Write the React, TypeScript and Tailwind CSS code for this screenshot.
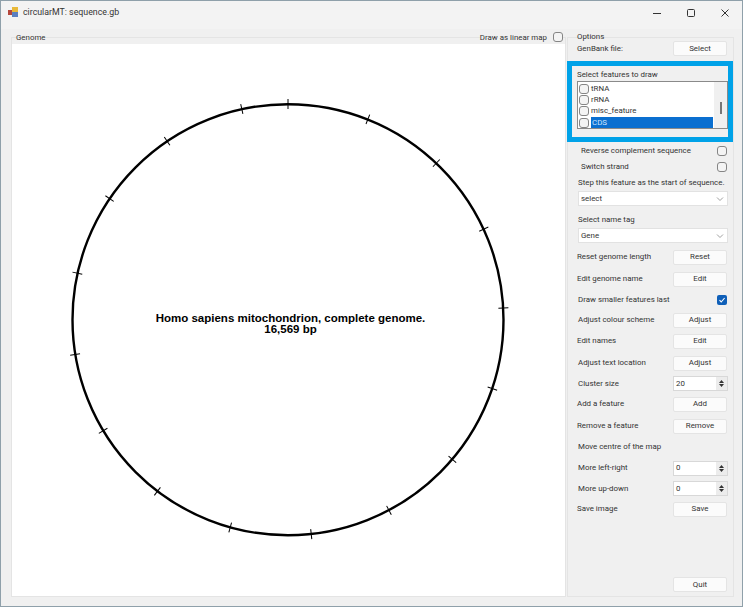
const ticks = Array.from({ length: 17 }, (_, i) => i * 21.727);

function Btn({ label }: { label: string }) {
  return (
    <div className="flex h-[15px] w-[54px] items-center justify-center rounded-[2px] border border-[#e4e4e4] bg-[#fbfbfb] text-[7.9px] text-[#333]">
      {label}
    </div>
  );
}

function Check({ on }: { on?: boolean }) {
  return on ? (
    <div className="flex h-[10px] w-[10px] shrink-0 items-center justify-center rounded-[2px] bg-[#0f5fb8]">
      <svg width="8" height="8" viewBox="0 0 8 8"><path d="M1.5 4.2 3.2 6 6.6 2" fill="none" stroke="#fff" strokeWidth="1.1" /></svg>
    </div>
  ) : (
    <div className="h-[10px] w-[10px] shrink-0 rounded-[3px] border border-[#858585] bg-[#f4f4f4]" />
  );
}

function Row({ label, children, h = 22, pl = 9 }: { label: string; children?: React.ReactNode; h?: number; pl?: number }) {
  return (
    <div className="flex items-center justify-between pr-[6px]" style={{ height: h, paddingLeft: pl }}>
      <span className="text-[7.9px] text-[#333]">{label}</span>
      {children}
    </div>
  );
}

function Combo({ label }: { label: string }) {
  return (
    <div className="ml-[10px] mr-[5px] flex h-[15px] items-center justify-between border border-[#e2e2e2] bg-white pl-[2px] pr-[3px] text-[7.9px] text-[#333]">
      {label}
      <svg width="8" height="6" viewBox="0 0 8 6"><path d="M1 1.5 4 4.5 7 1.5" fill="none" stroke="#888" strokeWidth="0.8" /></svg>
    </div>
  );
}

function Spin({ value }: { value: string }) {
  return (
    <div className="-mr-[1px] flex h-[15px] w-[55px] items-center justify-between border border-[#d8d8d8] bg-white pl-[2px] text-[7.9px] text-[#333]">
      {value}
      <div className="flex h-full w-[11px] flex-col items-center justify-center gap-[1px] bg-[#ececec]">
        <svg width="5" height="3" viewBox="0 0 5 3"><path d="M2.5 0 5 3H0z" fill="#333" /></svg>
        <svg width="5" height="3" viewBox="0 0 5 3"><path d="M0 0h5L2.5 3z" fill="#333" /></svg>
      </div>
    </div>
  );
}

export default function App() {
  return (
    <div className="flex h-[607px] w-[743px] flex-col overflow-hidden border border-[#8fa0aa] bg-[#f0f0f0] font-['Roboto',sans-serif]">
      <div className="flex h-[28px] shrink-0 items-center bg-[#f3f3f3] pb-[5px] pl-[7px]">
        <svg width="11" height="11" viewBox="0 0 11 11">
          <rect x="0" y="3" width="4" height="5" fill="#b5473c" />
          <rect x="4" y="0" width="6" height="5" fill="#e8b93a" />
          <rect x="4" y="5" width="6" height="5" fill="#5a7fc0" />
        </svg>
        <span className="ml-[4px] text-[8.8px] text-[#333]">circularMT: sequence.gb</span>
        <div className="ml-auto flex items-center gap-[26px] pr-[13px]">
          <svg width="8" height="8" viewBox="0 0 8 8"><path d="M0 4.5h8" stroke="#333" /></svg>
          <svg width="8" height="8" viewBox="0 0 8 8"><rect x="0.5" y="0.5" width="7" height="7" rx="1" fill="none" stroke="#333" /></svg>
          <svg width="8" height="8" viewBox="0 0 8 8"><path d="M0.5 0.5 7.5 7.5M7.5 0.5 0.5 7.5" stroke="#333" /></svg>
        </div>
      </div>
      <div className="flex min-h-0 flex-1 gap-[1px] pb-[9px] pl-[10px] pr-[8px] pt-[8px]">
        <div className="flex w-[555px] flex-col border border-[#e4e4e4]">
          <div className="-mt-[7px] flex h-[13px] shrink-0 items-center justify-between pl-[4px] pr-[2px] text-[7.9px] text-[#333]">
            <span className="bg-[#f0f0f0]">Genome</span>
            <div className="flex items-center gap-[6px] bg-[#f0f0f0]">
              <span>Draw as linear map</span>
              <Check />
            </div>
          </div>
          <div className="relative min-h-0 flex-1 bg-white">
            <svg width="553" height="551" viewBox="12 44 553 551" className="block">
              <circle cx="288" cy="319.7" r="215.5" fill="none" stroke="#000" strokeWidth="2.4" />
              {ticks.map((a) => (
                <line key={a} x1="288" y1="99" x2="288" y2="109" stroke="#000" strokeWidth="1" transform={`rotate(${a} 288 319.7)`} />
              ))}
            </svg>
            <div className="absolute left-0 top-[269px] flex w-[557px] flex-col items-center text-center font-['Liberation_Sans',sans-serif] text-[11.5px] font-bold leading-[11px] text-black">
              <span>Homo sapiens mitochondrion, complete genome.</span>
              <span>16,569 bp</span>
            </div>
          </div>
        </div>
        <div className="flex w-[167px] flex-col border border-[#e4e4e4]">
          <div className="-mt-[6px] flex h-[10px] items-center pl-[9px] text-[7.9px] text-[#333]">Options</div>
          <div className="-mt-[1px]"><Row label="GenBank file:" h={15}><Btn label="Select" /></Row></div>
          <div className="-ml-[1px] mt-[5px] h-[81px] border-[5px] border-[#00a2e8] pl-[5px]">
            <div className="flex h-[15px] items-center pt-[3px] text-[7.9px] text-[#333]">Select features to draw</div>
            <div className="relative flex h-[48px] flex-col border border-[#8a8a8a] bg-white pl-[1px] pr-[14px] pt-[1px]">
              {["tRNA", "rRNA", "misc_feature", "CDS"].map((f) => (
                <div key={f} className="flex h-[11.3px] items-center gap-[2px] text-[7.9px] text-[#333]">
                  <Check />
                  <span className={f === "CDS" ? "flex h-full flex-1 items-center bg-[#0a6fd0] pl-[1px] text-[#cfe6ff]" : ""}>{f}</span>
                </div>
              ))}
              <div className="absolute bottom-0 right-0 top-0 flex w-[13px] justify-center bg-[#f0f0f0] pt-[20px]">
                <div className="h-[12px] w-[2px] bg-[#777]" />
              </div>
            </div>
          </div>
          <div className="mt-[1px]"><Row label="Reverse complement sequence" h={16} pl={13}><Check /></Row></div>
          <Row label="Switch strand" h={16} pl={13}><Check /></Row>
          <div className="flex h-[16px] items-center pl-[10px] text-[7.9px] text-[#333]">Step this feature as the start of sequence.</div>
          <Combo label="select" />
          <div className="mt-[7px] flex h-[14px] items-center pl-[10px] text-[7.9px] text-[#333]">Select name tag</div>
          <div className="mt-[1px]"><Combo label="Gene" /></div>
          <div className="mt-[3px]">
            <Row label="Reset genome length"><Btn label="Reset" /></Row>
            <Row label="Edit genome name"><Btn label="Edit" /></Row>
            <Row label="Draw smaller features last" pl={10} h={20}><Check on /></Row>
            <Row label="Adjust colour scheme" h={20} pl={10}><Btn label="Adjust" /></Row>
            <Row label="Edit names"><Btn label="Edit" /></Row>
            <Row label="Adjust text location" pl={10}><Btn label="Adjust" /></Row>
            <Row label="Cluster size" pl={10} h={19}><Spin value="20" /></Row>
            <Row label="Add a feature"><Btn label="Add" /></Row>
            <Row label="Remove a feature"><Btn label="Remove" /></Row>
            <Row label="Move centre of the map" pl={10} h={20} />
            <Row label="More left-right" pl={10} h={22}><Spin value="0" /></Row>
            <Row label="More up-down" pl={10} h={19}><Spin value="0" /></Row>
            <Row label="Save image"><Btn label="Save" /></Row>
          </div>
          <div className="mt-auto flex justify-end pb-[4px] pr-[6px]"><Btn label="Quit" /></div>
        </div>
      </div>
    </div>
  );
}
